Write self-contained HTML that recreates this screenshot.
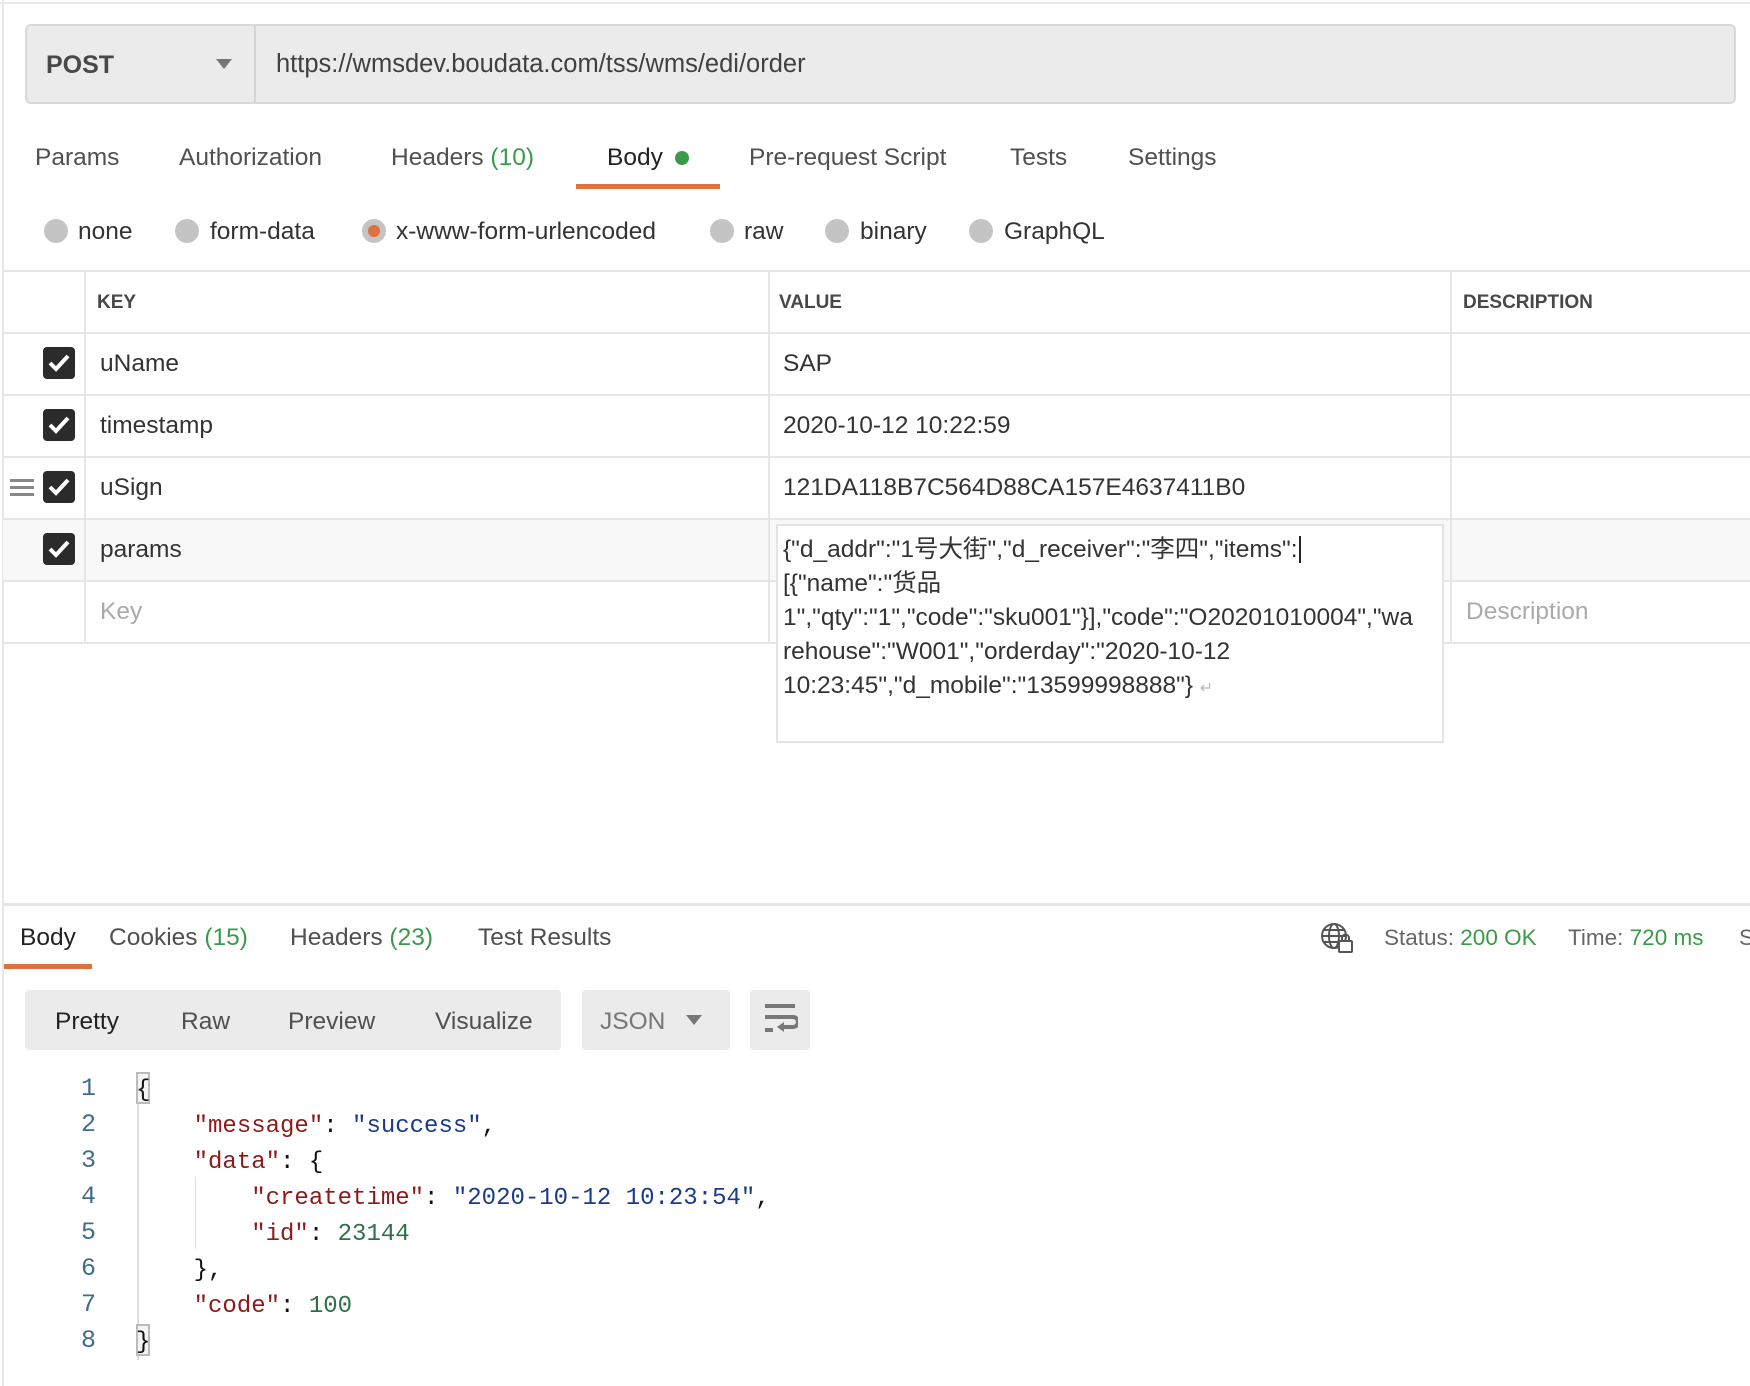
<!DOCTYPE html>
<html><head><meta charset="utf-8"><style>
*{margin:0;padding:0;box-sizing:border-box}
body{width:1750px;height:1386px;background:#fff;position:relative;overflow:hidden;font-family:"Liberation Sans","Noto Sans CJK SC",sans-serif;color:#333}
.a{position:absolute;white-space:nowrap}
.t{font-size:24.5px;line-height:30px;color:#505050}
.g{color:#3a9a4a}
.hl{position:absolute;height:2px;background:#e6e6e6}
.vl{position:absolute;width:2px;background:#e6e6e6}
.rad{position:absolute;width:24px;height:24px;border-radius:50%;background:#c4c4c4}
.cb{position:absolute;left:43px;width:32px;height:32px;border-radius:4px;background:#2b2b2b}
.cb svg{position:absolute;left:5px;top:6px}
.k{font-size:24.5px;line-height:30px;color:#333}
.code{font-family:"Liberation Mono",monospace;font-size:24px;line-height:30px}
.ln{color:#3d6e8c;text-align:right;width:30px;left:66px;font-size:25px}
.s{color:#8b1a1a}.v{color:#1a3a8b}.n{color:#2f6f4a}
</style></head><body>
<div class="hl" style="left:0;top:2px;width:1750px;background:#e8e8e8"></div>
<div class="vl" style="left:2px;top:0;height:1386px;background:#e8e8e8"></div>

<div class="a" style="left:25px;top:24px;width:1711px;height:80px;background:#ebebeb;border:2px solid #d8d8d8;border-radius:6px"></div>
<div class="vl" style="left:254px;top:26px;height:76px;background:#d4d4d4"></div>
<div class="a" style="left:46px;top:50px;font-size:25px;line-height:30px;font-weight:bold;color:#484848">POST</div>
<div class="a" style="left:216px;top:59px;width:0;height:0;border-left:8px solid transparent;border-right:8px solid transparent;border-top:10px solid #777"></div>
<div class="a" style="left:276px;top:49px;font-size:25.5px;line-height:30px;color:#404040">https://wmsdev.boudata.com/tss/wms/edi/order</div>

<div class="a t" style="left:35px;top:143px">Params</div>
<div class="a t" style="left:179px;top:143px">Authorization</div>
<div class="a t" style="left:391px;top:143px">Headers <span class="g">(10)</span></div>
<div class="a t" style="left:607px;top:143px;color:#222">Body</div>
<div class="a" style="left:675px;top:151px;width:14px;height:14px;border-radius:50%;background:#3a9a4a"></div>
<div class="a" style="left:576px;top:184px;width:144px;height:5px;background:#e07040"></div>
<div class="a t" style="left:749px;top:143px">Pre-request Script</div>
<div class="a t" style="left:1010px;top:143px">Tests</div>
<div class="a t" style="left:1128px;top:143px">Settings</div>

<div class="rad" style="left:44px;top:219px"></div><div class="a t" style="left:78px;top:217px;color:#333">none</div>
<div class="rad" style="left:175px;top:219px"></div><div class="a t" style="left:210px;top:217px;color:#333">form-data</div>
<div class="rad" style="left:362px;top:219px"></div><div class="a" style="left:368px;top:225px;width:12px;height:12px;border-radius:50%;background:#e07040"></div>
<div class="a t" style="left:396px;top:217px;color:#333">x-www-form-urlencoded</div>
<div class="rad" style="left:710px;top:219px"></div><div class="a t" style="left:744px;top:217px;color:#333">raw</div>
<div class="rad" style="left:825px;top:219px"></div><div class="a t" style="left:860px;top:217px;color:#333">binary</div>
<div class="rad" style="left:969px;top:219px"></div><div class="a t" style="left:1004px;top:217px;color:#333">GraphQL</div>

<div class="a" style="left:3px;top:520px;width:1747px;height:61px;background:#f8f8f8"></div>
<div class="hl" style="left:3px;top:270px;width:1747px"></div>
<div class="hl" style="left:3px;top:332px;width:1747px"></div>
<div class="hl" style="left:3px;top:394px;width:1747px"></div>
<div class="hl" style="left:3px;top:456px;width:1747px"></div>
<div class="hl" style="left:3px;top:518px;width:1747px"></div>
<div class="hl" style="left:3px;top:580px;width:1747px"></div>
<div class="hl" style="left:3px;top:642px;width:1747px"></div>
<div class="vl" style="left:84px;top:270px;height:374px"></div>
<div class="vl" style="left:768px;top:270px;height:374px"></div>
<div class="vl" style="left:1450px;top:270px;height:374px"></div>
<div class="a" style="left:97px;top:291px;font-size:19px;line-height:24px;font-weight:bold;color:#484848">KEY</div>
<div class="a" style="left:779px;top:291px;font-size:19px;line-height:24px;font-weight:bold;color:#484848">VALUE</div>
<div class="a" style="left:1463px;top:291px;font-size:19px;line-height:24px;font-weight:bold;color:#484848">DESCRIPTION</div>

<div class="cb" style="top:347px"><svg width="22" height="20" viewBox="0 0 22 20"><path d="M2 10l6 6L20 3" stroke="#fff" stroke-width="4" fill="none"/></svg></div>
<div class="cb" style="top:409px"><svg width="22" height="20" viewBox="0 0 22 20"><path d="M2 10l6 6L20 3" stroke="#fff" stroke-width="4" fill="none"/></svg></div>
<div class="cb" style="top:471px"><svg width="22" height="20" viewBox="0 0 22 20"><path d="M2 10l6 6L20 3" stroke="#fff" stroke-width="4" fill="none"/></svg></div>
<div class="cb" style="top:533px"><svg width="22" height="20" viewBox="0 0 22 20"><path d="M2 10l6 6L20 3" stroke="#fff" stroke-width="4" fill="none"/></svg></div>
<div class="a" style="left:10px;top:479px;width:24px;height:3px;background:#888;box-shadow:0 7px 0 #888,0 14px 0 #888"></div>

<div class="a k" style="left:100px;top:349px">uName</div>
<div class="a k" style="left:100px;top:411px">timestamp</div>
<div class="a k" style="left:100px;top:473px">uSign</div>
<div class="a k" style="left:100px;top:535px">params</div>
<div class="a k" style="left:100px;top:597px;color:#aaa">Key</div>
<div class="a k" style="left:783px;top:349px">SAP</div>
<div class="a k" style="left:783px;top:411px">2020-10-12 10:22:59</div>
<div class="a k" style="left:783px;top:473px">121DA118B7C564D88CA157E4637411B0</div>
<div class="a k" style="left:1466px;top:597px;color:#aaa">Description</div>

<div class="a" style="left:776px;top:524px;width:668px;height:219px;background:#fff;border:2px solid #e4e4e4"></div>
<div class="a k" style="left:783px;top:533px;line-height:34px;font-size:24.5px">{"d_addr":"1号大街","d_receiver":"李四","items":<span style="border-left:2px solid #222;margin-left:1px"></span><br>[{"name":"货品<br>1","qty":"1","code":"sku001"}],"code":"O20201010004","wa<br>rehouse":"W001","orderday":"2020-10-12<br>10:23:45","d_mobile":"13599998888"} <span style="color:#bbb;font-size:16px">↵</span></div>

<div class="hl" style="left:3px;top:903px;width:1747px;height:3px"></div>
<div class="a t" style="left:20px;top:923px;color:#222">Body</div>
<div class="a t" style="left:109px;top:923px">Cookies <span class="g">(15)</span></div>
<div class="a t" style="left:290px;top:923px">Headers <span class="g">(23)</span></div>
<div class="a t" style="left:478px;top:923px">Test Results</div>
<div class="a" style="left:4px;top:964px;width:88px;height:5px;background:#e07040"></div>

<svg class="a" style="left:1320px;top:922px" width="36" height="32" viewBox="0 0 36 32"><g stroke="#555" stroke-width="2" fill="none"><circle cx="14" cy="14" r="12"/><ellipse cx="14" cy="14" rx="5" ry="12"/><path d="M2 14h24M4 8h20M4 20h14"/></g><rect x="19" y="19" width="13" height="11" rx="1" fill="#fff" stroke="#555" stroke-width="2"/><path d="M22 19v-3a3.5 3.5 0 0 1 7 0v3" stroke="#555" stroke-width="2" fill="none"/></svg>
<div class="a t" style="left:1384px;top:923px;font-size:22.5px;color:#666">Status: <span class="g">200 OK</span></div>
<div class="a t" style="left:1568px;top:923px;font-size:22.5px;color:#666">Time: <span class="g">720 ms</span></div>
<div class="a t" style="left:1739px;top:923px;font-size:22.5px;color:#666">S</div>

<div class="a" style="left:25px;top:990px;width:536px;height:60px;background:#ebebeb;border-radius:4px"></div>
<div class="a t" style="left:55px;top:1007px;color:#222">Pretty</div>
<div class="a t" style="left:181px;top:1007px">Raw</div>
<div class="a t" style="left:288px;top:1007px">Preview</div>
<div class="a t" style="left:435px;top:1007px">Visualize</div>
<div class="a" style="left:582px;top:990px;width:148px;height:60px;background:#ebebeb;border-radius:4px"></div>
<div class="a t" style="left:600px;top:1007px;color:#777">JSON</div>
<div class="a" style="left:686px;top:1015px;width:0;height:0;border-left:8px solid transparent;border-right:8px solid transparent;border-top:10px solid #777"></div>
<div class="a" style="left:750px;top:990px;width:60px;height:60px;background:#ebebeb;border-radius:4px"></div>
<svg class="a" style="left:762px;top:1002px" width="36" height="36" viewBox="0 0 36 36"><g stroke="#777" stroke-width="4" fill="none"><path d="M3 4h30M3 15h28a5 5 0 0 1 0 10H20M3 28h8"/></g><path d="M22 20l-7 5 7 5z" fill="#777"/></svg>

<div class="vl" style="left:137px;top:1072px;height:288px;background:#ddd"></div>
<div class="vl" style="left:195px;top:1177px;height:72px;width:1px;background:#ddd"></div>
<div class="a" style="left:136px;top:1072px;width:14px;height:32px;border:2px solid #bbb;background:#f4f4f4"></div>
<div class="a" style="left:136px;top:1324px;width:14px;height:32px;border:2px solid #bbb;background:#f4f4f4"></div>
<div class="a code ln" style="top:1074px">1</div>
<div class="a code ln" style="top:1110px">2</div>
<div class="a code ln" style="top:1146px">3</div>
<div class="a code ln" style="top:1182px">4</div>
<div class="a code ln" style="top:1218px">5</div>
<div class="a code ln" style="top:1254px">6</div>
<div class="a code ln" style="top:1290px">7</div>
<div class="a code ln" style="top:1326px">8</div>
<div class="a code" style="left:136px;top:1073px;white-space:pre;line-height:36px;color:#111">{
    <span class="s">"message"</span>: <span class="v">"success"</span>,
    <span class="s">"data"</span>: {
        <span class="s">"createtime"</span>: <span class="v">"2020-10-12 10:23:54"</span>,
        <span class="s">"id"</span>: <span class="n">23144</span>
    },
    <span class="s">"code"</span>: <span class="n">100</span>
}</div>
</body></html>
